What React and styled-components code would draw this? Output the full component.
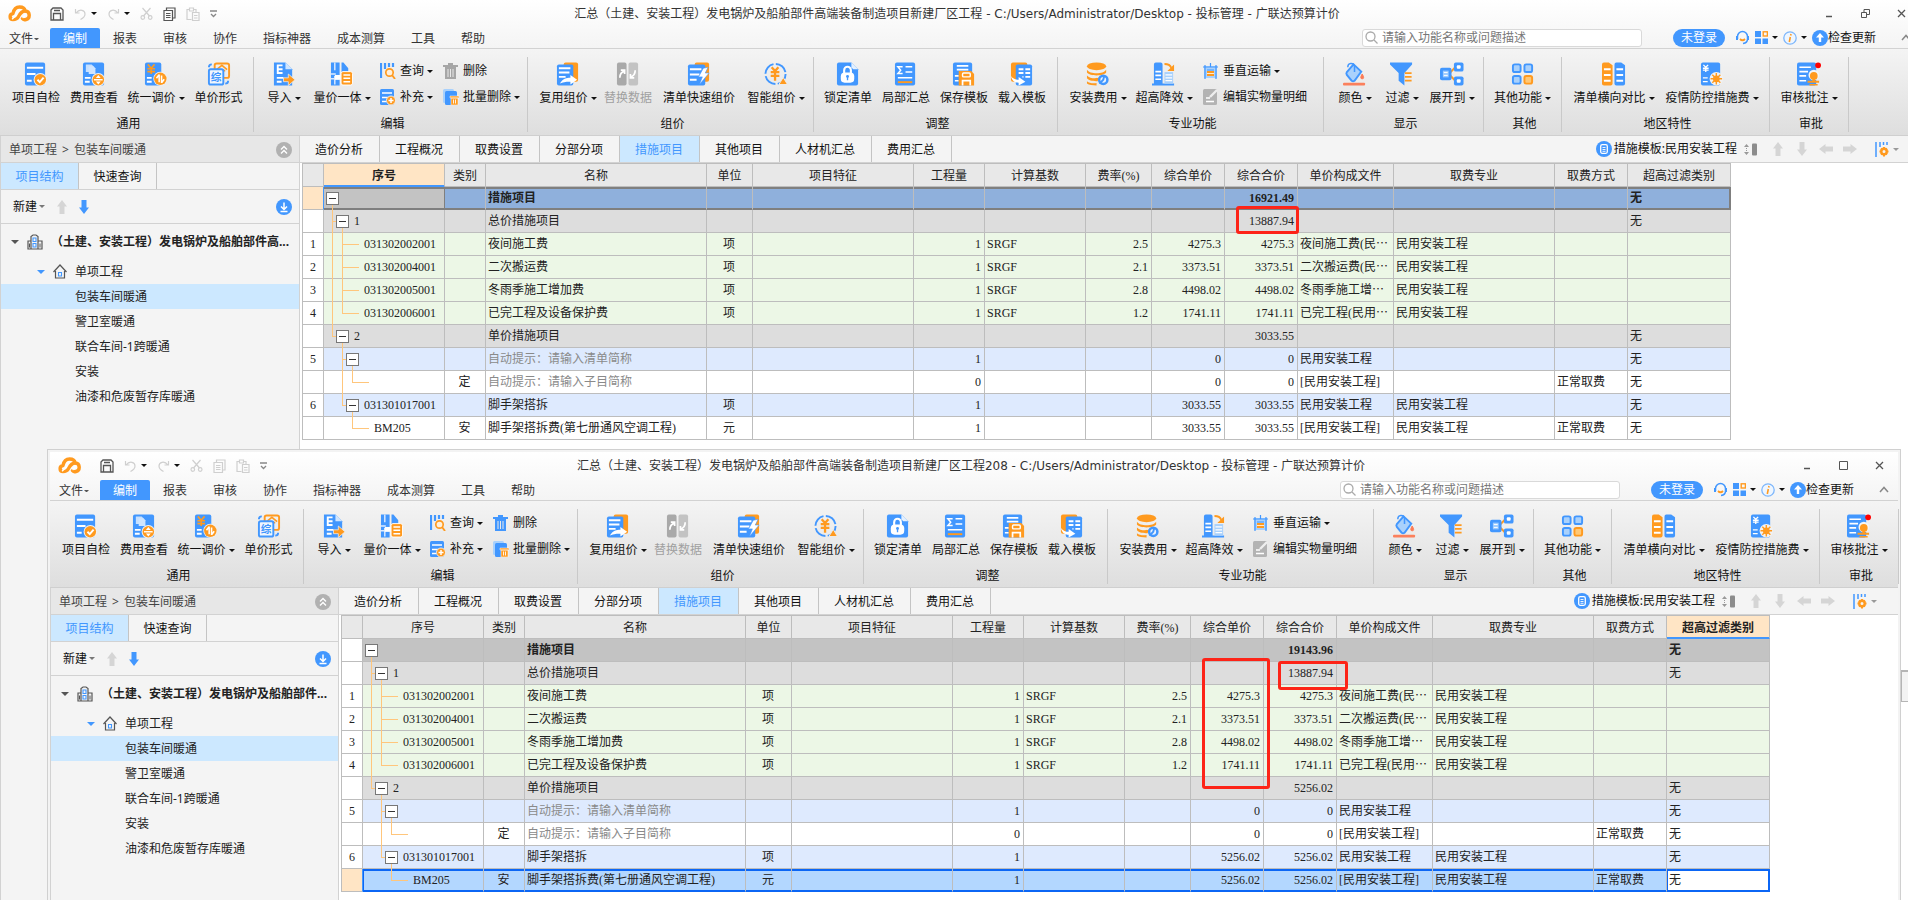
import { useId, useState } from "react";
import styled, { createGlobalStyle, css } from "styled-components";

const BLUE = "#4297fe";
const ORANGE = "#ff9a1f";
const PALE = "#a9d1fc";

const UI_FONT = `"Noto Sans", "Noto Sans CJK SC", sans-serif`;
const TITLE_FONT = `"DejaVu Sans", "Noto Sans CJK SC", sans-serif`;
const GRID_FONT = `"Liberation Serif", "Noto Sans CJK SC", serif`;

const GlobalStyle = createGlobalStyle`
  *, *::before, *::after { box-sizing: border-box; }
  html, body, #root { height: 100%; }
  body {
    margin: 0;
    overflow: hidden;
    background: #fff;
    color: #111;
    font: 12px/16px ${UI_FONT};
  }
  button, input { font: inherit; color: inherit; }
  button { padding: 0; border: 0; background: none; white-space: nowrap; }
  svg { display: block; flex: none; }
`;

/* ---------- icons ---------- */

const Svg = ({ w = 24, h = w, box = `0 0 ${w} ${h}`, children }) => (
  <svg width={w} height={h} viewBox={box} fill="none" aria-hidden="true">{children}</svg>
);

const Lines = ({ d, c = "#fff", w = 2 }) => <path d={d} stroke={c} strokeWidth={w} />;

const IconText = ({ x, y, size, fill, children }) => (
  <text x={x} y={y} fontSize={size} fill={fill} fontWeight="700" textAnchor="middle" fontFamily={UI_FONT}>{children}</text>
);

const ribbonIcons = {
  check: <>
    <rect x="1" width="21" height="24" rx="2" fill={BLUE} />
    <Lines d="M3 5.500h17M3 12h9M3 19h5" />
    <circle cx="17" cy="18" r="7" fill="#f2f2f2" /><circle cx="17" cy="18" r="6" fill={ORANGE} />
    <Lines d="M14 18l2.400 2.500 4-4.800" />
  </>,
  cost: <>
    <rect x="1" width="22" height="24" rx="2" fill={BLUE} />
    <path d="M4 2h6l2 2v6H4z" fill="#fff" opacity=".7" /><path d="M7 4h5l2 2v6H7z" fill="#cfe5ff" />
    <Lines d="M3 16h6M3 20h5" />
    <circle cx="17" cy="18" r="7" fill="#f2f2f2" /><circle cx="17" cy="18" r="6" fill={ORANGE} />
    <Lines d="M12.500 18h9" w={1.500} /><path d="M17 13l2.500 3.200h-5zM17 23l2.500-3.200h-5z" fill="#fff" />
  </>,
  adjust: <>
    <rect x="1" width="17" height="24" rx="2" fill={BLUE} />
    <path d="M4 2l3.500 4L11 2M3.500 6.500h8M3.500 9.500h8M7.500 6v6" stroke={ORANGE} strokeWidth="1.700" />
    <Lines d="M3 16h5M3 20h5" />
    <circle cx="17" cy="17" r="7.300" fill="#f2f2f2" /><circle cx="17" cy="17" r="6.500" fill={ORANGE} />
    <path d="M15.800 12.500v8M13 16.500l2.500-3.500M18.300 13.500v8M21 17.500l-2.500 3.500" stroke="#fff" strokeWidth="1.600" />
  </>,
  form: <>
    <rect x="8" y="1" width="15" height="15" rx="2" stroke={ORANGE} strokeWidth="2" />
    <path d="M10 7.500l5.500-4.500 5.500 4.500M12 8.500h7M15.500 8v6" stroke={ORANGE} strokeWidth="1.600" />
    <rect x="2" y="7" width="15" height="16" rx="2" fill="#f0f6fd" stroke={BLUE} strokeWidth="2" />
    <IconText x="9.500" y="19.500" size="11" fill={BLUE}>综</IconText>
    <path d="M2 5c0-2 1-3 3-3M19 22c2 0 3-1 3-3" stroke={BLUE} strokeWidth="2" />
  </>,
  import: <>
    <path d="M2 0h12l7 7v17H2z" fill={BLUE} /><path d="M14 0v7h7z" fill="#cfe5ff" />
    <path d="M11 3H6v8h5M6 7h5M5 16h7M5 20h5" stroke="#fff" strokeWidth="2" />
    <path d="M12 16h5v-4l7 6-7 6v-4h-5z" fill={ORANGE} stroke="#eee" strokeWidth=".8" />
  </>,
  merge: <>
    <path d="M1 0h9v24H1zM12 0h2l5 6v5h-7z" fill={BLUE} />
    <path d="M0 12h6M5 14v9M0 17h10M5 0v8" stroke="#dcebff" strokeWidth="1.500" />
    <rect x="5" y="13" width="6" height="5" fill="#fff" />
    <rect x="11.500" y="9.500" width="12" height="14" rx="2" fill={ORANGE} stroke="#fff" />
    <Lines d="M14 13h7M14 16.500h7M14 20h7" w={1.500} />
  </>,
  reuse: <>
    <rect x="8" width="15" height="20" rx="2" fill={ORANGE} />
    <rect x="1" y="2" width="17" height="22" rx="2" fill={BLUE} />
    <Lines d="M3 6h12M3 10.500h11M3 15h7" />
    <path d="M4 22c3-5 7-6 11-6v-3l7 5-7 5v-3c-4 0-6 0-11 2z" fill="#fff" />
  </>,
  replace: <>
    <rect x="1" width="10" height="24" rx="2" fill="#a9a9a9" /><rect x="13" width="10" height="24" rx="2" fill="#c3c3c3" />
    <path d="M4 16c0-4 1-6 5-7M5 8h4v4M20 8c0 4-1 6-5 7M19 16h-4v-4" stroke="#fff" strokeWidth="1.800" />
  </>,
  quick: <>
    <rect x="8" width="15" height="20" rx="2" fill={ORANGE} />
    <rect x="1" y="2" width="18" height="22" rx="2" fill={BLUE} />
    <Lines d="M3 7h12M3 12.500h10M3 18h7" />
    <path d="M17 6l5-1-3 6h4l-10 12 3-8h-4z" fill="#fff" stroke={BLUE} strokeWidth=".6" />
  </>,
  smart: <>
    <circle cx="12" cy="12" r="10.500" stroke={BLUE} strokeWidth="2" strokeDasharray="14 2.500" />
    <path d="M8 5l3.500 4L15 5M7 10h9M7 14h9M11.500 9v10" stroke={ORANGE} strokeWidth="2.400" />
    <path d="M20 15.500l4.500 7.500h-9z" fill={ORANGE} stroke="#eee" />
  </>,
  lock: <>
    <path d="M3 0h13l7 7v15a2 2 0 0 1-2 2H3a2 2 0 0 1-2-2V2a2 2 0 0 1 2-2z" fill={BLUE} /><path d="M16 0v5l2 2h5z" fill="#e3f0ff" />
    <rect x="5" y="10.500" width="14" height="10.500" rx="4" fill="#fff" />
    <path d="M8.500 12V8a3.500 3.500 0 0 1 7 0v4" stroke="#fff" strokeWidth="2.200" />
    <circle cx="12" cy="14.500" r="1.500" fill={BLUE} /><Lines d="M12 15v3.500" c={BLUE} w={1.400} />
  </>,
  sum: <>
    <rect x="1" width="21" height="24" rx="2" fill={BLUE} />
    <path d="M9 4.500H4l3 3.500-3 3.500h5" stroke="#fff" strokeWidth="1.500" />
    <Lines d="M12 4.500h7M12 10h7M4 16h15" w={1.500} /><Lines d="M4 20.500h15" c={ORANGE} />
  </>,
  save: <>
    <rect x="1" width="20" height="24" rx="2" fill={BLUE} />
    <Lines d="M5 3.500h12M5 7.500h12M3 14h4M3 19h4" w={1.700} />
    <path d="M7 9h13l3 3v12H7z" fill={ORANGE} /><rect x="11" y="11" width="8" height="4" rx="1" stroke="#fff" strokeWidth="1.500" />
    <path d="M11 24v-5h8v5" stroke="#fff" strokeWidth="1.800" />
  </>,
  load: <>
    <rect x="1" width="17" height="20" rx="2" fill={ORANGE} />
    <rect x="6" y="2" width="17" height="22" rx="2" fill={BLUE} />
    <Lines d="M9 7h5M16 7h5M9 11h5M16 11h5M13 15h1M16 15h5" />
    <path d="M1 14c2 3 5 4 8 4v-3l7 5-7 4v-3c-4 0-7-2-8-7z" fill="#fff" />
  </>,
  install: <>
    <ellipse cx="11" cy="4" rx="10" ry="4" fill={ORANGE} />
    <path d="M1 7.500c3 5 17 5 20 0v3c-3 4-17 4-20 0zM1 13.500c3 3.500 10 3.500 13 2l-2 4c-4 0-8 0-11-3zM1 19.500c2 2 6 2.500 10 2v2.500c-4 0-8-.5-10-2z" fill={ORANGE} />
    <circle cx="18" cy="18" r="4.300" fill="#e8f2fe" stroke={BLUE} strokeWidth="2.600" />
    <path d="M14 22l4-4 1-4" stroke={BLUE} strokeWidth="2" />
  </>,
  height: <>
    <path d="M2 22V2q0-2 2-2h5q2 0 2 2v20h12v2H0v-2z" fill={BLUE} />
    <Lines d="M3.500 9.500h6M3.500 13.500h6M3.500 17.500h6" w={1.700} />
    <rect x="13" y="10" width="9" height="12" fill={PALE} /><Lines d="M14 13h7M14 16h7M14 19h7" w={1.300} />
    <path d="M13 1.500c3.500 0 6 1 7 4" stroke={ORANGE} strokeWidth="2" /><path d="M23 2v7h-7z" fill={ORANGE} />
  </>,
  color: <>
    <path d="M11 2l8 7.500-7 9.500q-1.500 1-3 0L4 13q-1-1.500 0-3z" fill={PALE} stroke={BLUE} strokeWidth="2" />
    <path d="M5 5c0-5 6-5 7-1v6" stroke={BLUE} strokeWidth="1.600" />
    <path d="M20 12q3 5 0 5t0-5z" fill="#fb7a55" stroke="#fb7a55" /><rect y="21" width="23" height="3" rx="1" fill="#fb805c" />
  </>,
  filter: <>
    <path d="M0 0h23v2l-8 9v13l-6-5v-8L0 2z" fill={BLUE} />
    <Lines d="M15.500 11h7M15.500 15h7M15.500 19h7" c={ORANGE} w={1.800} />
  </>,
  expand: <>
    <path d="M9 12l7-7M9 12l7 7" stroke={ORANGE} strokeWidth="2" />
    <rect y="5.500" width="12" height="13" rx="2" fill={BLUE} /><rect x="3" y="8.500" width="6" height="7" fill="#9dcbff" />
    <Lines d="M4 10.500h4M4 13.500h4" w={1} />
    <rect x="14.500" width="10" height="9.500" rx="2" fill={BLUE} /><rect x="14.500" y="14.500" width="10" height="9.500" rx="2" fill={BLUE} />
    <rect x="17.500" y="3" width="4" height="3.500" rx="1" fill="#fff" /><rect x="17.500" y="17.500" width="4" height="3.500" rx="1" fill="#fff" />
  </>,
  other: <>
    {[[2, 2], [14, 2], [2, 14]].map(([x, y]) => <rect key={x + "-" + y} x={x} y={y} width="8" height="8" rx="2" fill={PALE} stroke={BLUE} strokeWidth="2" />)}
    <rect x="14" y="14" width="8" height="8" rx="2" fill="#ffc877" stroke={ORANGE} strokeWidth="2" />
  </>,
  compare: <>
    <path d="M0 2q0-2 2-2h5l4 3v19q0 2-2 2H2q-2 0-2-2z" fill={ORANGE} /><path d="M13 2q0-2 2-2h5l4 3v19q0 2-2 2h-7q-2 0-2-2z" fill={BLUE} />
    <Lines d="M2 7h7M2 13h7M2 19h7M15 7h7M15 13h7M15 19h7" />
  </>,
  epidemic: <>
    <rect x="1" width="20" height="24" rx="2" fill={BLUE} />
    <path d="M3.500 2.500L6 5l2.500-2.500M3 6h6M3 8h6M6 5v5M3 16h5M3 20h5" stroke="#fff" strokeWidth="1.400" />
    <circle cx="17" cy="17" r="7" fill="#f2f2f2" /><circle cx="17" cy="17" r="3.500" fill={ORANGE} />
    <path d="M17 11v12M11 17h12M12.800 12.800l8.400 8.400M21.200 12.800l-8.400 8.400" stroke={ORANGE} strokeWidth="1.500" />
  </>,
  review: <>
    <rect width="20" height="24" rx="2" fill={BLUE} />
    <Lines d="M2.500 5h12M2.500 9.500h9M2.500 14h7M2.500 19h7" w={1.700} />
    <circle cx="17.500" cy="13" r="5.500" fill="#f5f5f5" /><circle cx="17.500" cy="14" r="4" fill={ORANGE} />
    <path d="M16 15h3v4h4v2H11v-2h5zM13 22.500h8.500V24H13z" fill={ORANGE} /><circle cx="22" cy="3" r="3" fill="#f00" />
  </>,
};

const smallIcons = {
  query: <>
    <path d="M1 0v15M5 0v6M9 0v4M13 0v4" stroke={BLUE} strokeWidth="2.200" />
    <circle cx="9.500" cy="9.500" r="3.700" fill="#fff0db" stroke={ORANGE} strokeWidth="1.700" /><path d="M12 12l3 4" stroke={ORANGE} strokeWidth="1.800" />
  </>,
  supplement: <>
    <rect width="14" height="16" rx="1.500" fill={BLUE} /><Lines d="M2 4h10M2 8.500h6M2 12.500h4" w={1.500} />
    <circle cx="11" cy="11.500" r="4.500" fill={ORANGE} stroke="#eee" /><Lines d="M11 9v5M8.500 11.500h5" w={1.500} />
  </>,
  remove: <>
    <path d="M0 2h15v2H0zM5 0h5v2H5zM2 4h11v12H2z" fill="currentColor" /><Lines d="M5 6v8M7.500 6v8M10 6v8" c="#e9e9e9" w={1} />
  </>,
  removeMany: <>
    <rect width="11" height="14" rx="1.500" fill={PALE} /><rect x="2" y="2" width="12" height="14" rx="1.500" fill={BLUE} />
    <path d="M7 7h9v2H7zM8 9h7v7H8z" fill={ORANGE} stroke="#fff" strokeWidth=".5" /><Lines d="M10.500 10.500v4M12.500 10.500v4" w={0.900} />
  </>,
  lift: <>
    <rect x="1" y="3" width="13" height="12" fill={PALE} /><path d="M2 2v14M13 2v14M0 4h15M7.500 0v4M4 7h7" stroke={BLUE} strokeWidth="1.200" />
    <rect x="4" y="8" width="7" height="5" fill={ORANGE} /><Lines d="M4 10.500h7" w={0.800} />
  </>,
  edit: <>
    <rect width="14" height="16" rx="1.500" fill="#b3b3b3" /><Lines d="M3 9h4M3 12.500h8" w={1.300} /><path d="M14 1L7 8" stroke="#eee" strokeWidth="2.400" />
  </>,
};

const Logo = () => (
  <Svg w={23} h={17}>
    <g stroke={ORANGE} strokeWidth="3.400" strokeLinecap="round" strokeLinejoin="round">
      <path d="M5 14.500C1.500 14.500.8 9.300 5 8.500 6 3.500 9 2 11.500 2c3.500 0 5.300 2 5.500 4-3 0-4.500 1.800-6.500 5.500-1 1.800-1.600 3-5.500 3" />
      <path d="M17.200 6c5.200.2 5.200 7.500.8 8.500-1.500.4-3 0-3.500-.8" />
    </g>
    <path d="M4.500 13.800l4-4M15 12.500l3-3.500" stroke="#fff" strokeWidth="1.500" strokeLinecap="round" />
  </Svg>
);

const SaveFile = () => <Svg w={14}><path d="M1 3l2-2h8l2 2v10H1zM4 3.500h6M3.500 13V6.500h7V13" stroke="#555" strokeWidth="1.300" /></Svg>;
const Undo = ({ flip }) => (
  <Svg w={13}><g transform={flip ? "matrix(-1 0 0 1 13 0)" : undefined} stroke="#cfcfcf" strokeWidth="1.200"><path d="M1.500 2v4h4M2 6c4-5 9-2.500 9 1 0 2-1.500 4-4.500 5.500" /></g></Svg>
);
const Cut = () => <Svg w={13}><g stroke="#cfcfcf" strokeWidth="1.200"><path d="M2.500 1l7 8M10.500 1l-7 8" /><circle cx="2.800" cy="10.500" r="1.800" /><circle cx="10.200" cy="10.500" r="1.800" /></g></Svg>;
const Copy = ({ c }) => <Svg w={13} h={14}><path d="M1 3.500h8.500v10H1zM3.500 3V1h8.500v10H9.500M3 6.500h4.500M3 8.500h4.500M3 10.500h4.500" stroke={c} strokeWidth="1.200" /></Svg>;
const Paste = () => <Svg w={14}><path d="M5.500 12.500H1V2.500h3M7 2.500h3V5M3.500 1h4v3h-4zM6.500 5.500h6.500v8H6.500zM8 8.500h3.500M8 11h3.500" stroke="#cfcfcf" strokeWidth="1.200" /></Svg>;
const More = () => <Svg w={7} h={8}><path d="M0 1h7M1 4l2.500 2.500L6 4" stroke="#888" strokeWidth="1.300" /></Svg>;

const Caret = ({ c = "#111", w = 6 }) => <Svg w={w} h={w / 2} box="0 0 6 3"><path d="M0 0h6L3 3z" fill={c} /></Svg>;

const Arrow = ({ c = "#d5d5d5", turn = 0 }) => (
  <Svg w={14}><path transform={`rotate(${turn} 7 7)`} d="M7 0l5 6.500H9.500V14h-5V6.500H2z" fill={c} /></Svg>
);

const Headset = () => (
  <Svg w={15}><path d="M2.500 9V6.500a5 5 0 0 1 10 0V9q0 4-4.500 4.500" stroke={BLUE} strokeWidth="1.500" /><path d="M1 6h2v4H1zM12 6h2v4h-2z" fill={BLUE} /><path d="M5 9q2.500 2.500 5 0" stroke={ORANGE} strokeWidth="1.800" /></Svg>
);
const Apps = () => (
  <Svg w={13}><path d="M0 0h6v6H0zM0 7.500h6V13H0zM7.500 7.500H13V13H7.500z" fill={BLUE} /><rect x="8.200" y=".8" width="4.200" height="4.200" stroke={ORANGE} strokeWidth="1.400" /></Svg>
);
const Info = () => (
  <Svg w={14}><circle cx="7" cy="7" r="6.200" fill="#eef6ff" stroke="#7db6fb" strokeWidth="1.300" /><path d="M8 3l-.3 1.500M7.300 6l-1 5" stroke={ORANGE} strokeWidth="1.600" /></Svg>
);
const UpBadge = () => <Svg w={16}><circle cx="8" cy="8" r="8" fill={BLUE} /><path d="M8 3l4 4.500H9.200V12H6.800V7.500H4z" fill="#fff" /></Svg>;
const DownBadge = () => <Svg w={16}><circle cx="8" cy="8" r="8" fill={BLUE} /><path d="M8 3.500v6M5 7.500l3 3 3-3M4.500 12.500h7" stroke="#fff" strokeWidth="1.500" /></Svg>;
const FoldBadge = () => <Svg w={16}><circle cx="8" cy="8" r="8" fill="#b1b1b1" /><path d="M5 7.500l3-3 3 3M5 11.500l3-3 3 3" stroke="#fff" strokeWidth="1.400" /></Svg>;
const TemplateBadge = () => <Svg w={16}><circle cx="8" cy="8" r="8" fill={BLUE} /><rect x="4.700" y="3.700" width="6.600" height="8.600" rx="1.500" stroke="#fff" strokeWidth="1.300" /><Lines d="M6.500 6.500h3M6.500 8.500h3M6.500 10.300h3" w={0.900} /></Svg>;
const SortMark = () => <Svg w={13}><path d="M0 4l2.500-3L5 4M0 9l2.500 3L5 9" fill="#999" /><path d="M2.500 3v7" stroke="#999" strokeDasharray="1 1" /><rect x="8" y=".5" width="5" height="12" rx="1" fill="#8c8c8c" /></Svg>;
const ColumnSet = () => (
  <Svg w={14} h={15}><path d="M1 0v15M5 0v5M8.500 0v3M12 0v3" stroke={BLUE} strokeWidth="1.500" /><circle cx="9" cy="9.500" r="2.700" stroke={ORANGE} strokeWidth="2.400" /><path d="M9 5v2M9 12v2.500M4.500 9.500h2M11.500 9.500h2M6 6.500l1 1M11 11.500l1 1M12 6.500l-1 1M7 11.500l-1 1" stroke={ORANGE} strokeWidth="2" /></Svg>
);
const Building = () => (
  <Svg w={16}><path d="M4 15V2.500L6 1h3l2 1.500V15M4 7H1v8h14V7h-4" stroke="#555" strokeWidth="1.200" /><path d="M2.500 9.500v4M13 9.500v4" stroke="#555" /><path d="M6 4h3v3.500H6zM6 9.500h3v3.500H6z" stroke={BLUE} strokeWidth="1.100" /></Svg>
);
const House = () => <Svg w={14} h={15}><path d="M.5 8L7 1l6.500 7M2.500 7v7h9V7" stroke="#555" strokeWidth="1.200" /><path d="M5.500 8.500h3V12h-3z" stroke={BLUE} strokeWidth="1.100" /></Svg>;
const Magnifier = () => <Svg w={13}><circle cx="5.500" cy="5.500" r="4.500" stroke="#aaa" strokeWidth="1.300" /><path d="M9 9l3.500 3.500" stroke="#aaa" strokeWidth="1.300" /></Svg>;

/* ---------- window frame ---------- */

const Desktop = styled.main`
  position: relative;
  height: 100%;
  min-height: 100vh;
  overflow: hidden;
`;

const AppWindow = styled.section`
  position: absolute;
  display: flex;
  flex-direction: column;
  background: #fff;
  overflow: hidden;
  ${({ $back }) => $back
    ? css`inset: 0 -12px 0 0;`
    : css`
      inset: 449px 7px 0 47px;
      border: solid #d0d0d0;
      border-width: 1px 1px 0;
      padding: 2px 2px 0;
      background: #f3f3f3;
    `}
`;

const Chrome = styled.header`
  background: linear-gradient(#fff, #f4f4f4);
  border-bottom: 1px solid #d2d2d2;
`;

const TitleBar = styled.div`
  display: grid;
  grid-template-columns: 1fr auto 1fr;
  align-items: center;
  height: 27px;
  padding: 0 14px 0 8px;
`;

const QuickBar = styled.div`
  display: flex;
  align-items: center;
  gap: 10px;
  height: 24px;
`;

const IconButton = styled.button`
  display: inline-flex;
  align-items: center;
  gap: ${({ $gap = 4 }) => $gap}px;
`;

const LogoMark = styled.span`
  margin-right: 9px;
`;

const Title = styled.h1`
  margin: 0;
  font: 400 12px/16px ${TITLE_FONT};
  color: #333;
`;

const WindowButtons = styled.div`
  display: flex;
  justify-content: flex-end;
  gap: 27px;
  height: 24px;
  align-items: center;
`;

const MenuBar = styled.div`
  display: flex;
  align-items: flex-end;
  height: 21px;
`;

const MenuTab = styled.button`
  display: flex;
  align-items: center;
  gap: 1px;
  height: 20px;
  padding: 2px 13px 0;
  border-radius: 2px 2px 0 0;
  color: ${({ $active }) => ($active ? "#fff" : "#333")};
  background: ${({ $active }) => ($active ? BLUE : "none")};
  ${({ $tight }) => $tight && css`width: 50px; padding: 2px 0 0 9px;`}
`;

const Tools = styled.div`
  display: flex;
  align-items: center;
  align-self: center;
  height: 18px;
  margin-left: auto;
  margin-right: 9px;
  gap: 5px;
`;

const Search = styled.label`
  display: flex;
  align-items: center;
  gap: 4px;
  width: 280px;
  height: 18px;
  margin-right: 26px;
  padding: 0 3px 0 2px;
  border: 1px solid #d9d9d9;
  border-radius: 3px;
  background: #fff;

  input {
    flex: 1;
    min-width: 0;
    height: 16px;
    padding: 0;
    border: 0;
    outline: 0;
    background: none;
  }
  input::placeholder { color: #777; opacity: 1; }
`;

const Login = styled.button`
  width: 52px;
  height: 18px;
  margin-right: 5px;
  border-radius: 9px;
  background: ${BLUE};
  color: #fff;
`;

const Fold = styled.button`
  margin-left: 20px;
`;

/* ---------- ribbon ---------- */

const RibbonBar = styled.div`
  display: flex;
  height: 87px;
  padding: 8px 0 3px;
  background: linear-gradient(#f4f4f4, #dedede);
  border-bottom: 1px solid #cfcfcf;
`;

const Group = styled.section`
  display: flex;
  flex-direction: column;
  flex: none;
  border-right: 1px solid #c9c9c9;
  padding-top: 5px;
`;

const GroupRow = styled.div`
  display: flex;
  padding: 0 ${({ $right }) => $right}px 0 ${({ $left }) => $left}px;
`;

const GroupName = styled.h2`
  margin: 10px 0 0 4px;
  font-size: 12px;
  line-height: 16px;
  font-weight: 400;
  text-align: center;
`;

const BigButton = styled.button`
  display: flex;
  flex-direction: column;
  align-items: center;
  gap: 4px;
  width: ${({ $w }) => $w}px;
  color: ${({ disabled }) => (disabled ? "#a0a0a0" : "#111")};
`;

const Caption = styled.span`
  display: inline-flex;
  align-items: center;
  gap: 3px;
  line-height: 16px;
`;

const SmallColumn = styled.div`
  display: flex;
  flex-direction: column;
  gap: 10px;
  width: ${({ $w }) => $w}px;
  padding-top: 1px;
  margin-left: ${({ $gap = 0 }) => $gap}px;
`;

const SmallButton = styled.button`
  display: flex;
  align-items: center;
  gap: 4px;
  height: 16px;

  svg { color: ${({ $muted }) => ($muted ? "#a6a6a6" : BLUE)}; }
`;

const groups = [
  { name: "通用", left: 7, right: 5, items: [["check", "项目自检", 58], ["cost", "费用查看", 58], ["adjust", "统一调价", 66, 1], ["form", "单价形式", 59]] },
  {
    name: "编辑", left: 10, right: 8, items: [["import", "导入", 40, 1], ["merge", "量价一体", 76, 1]],
    columns: [
      { w: 63, items: [["query", "查询", 1], ["supplement", "补充", 1]] },
      { w: 76, items: [["remove", "删除"], ["removeMany", "批量删除", 1]] },
    ],
  },
  { name: "组价", left: 10, right: 1, items: [["reuse", "复用组价", 60, 1], ["replace", "替换数据", 60], ["quick", "清单快速组价", 82], ["smart", "智能组价", 72, 1]] },
  { name: "调整", left: 5, right: 6, items: [["lock", "锁定清单", 58], ["sum", "局部汇总", 58], ["save", "保存模板", 58], ["load", "载入模板", 58]] },
  {
    name: "专业功能", left: 7, right: 17, items: [["install", "安装费用", 66, 1], ["height", "超高降效", 66, 1]],
    columns: [{ w: 103, gap: 6, items: [["lift", "垂直运输", 1], ["edit", "编辑实物量明细"]] }],
  },
  { name: "显示", left: 8, right: 5, items: [["color", "颜色", 46, 1], ["filter", "过滤", 48, 1], ["expand", "展开到", 52, 1]] },
  { name: "其他", left: 0, right: 0, items: [["other", "其他功能", 77, 1]] },
  { name: "地区特性", left: 6, right: 5, items: [["compare", "清单横向对比", 92, 1], ["epidemic", "疫情防控措施费", 104, 1]] },
  { name: "审批", left: 0, right: 0, items: [["review", "审核批注", 78, 1]] },
];

function Ribbon({ canDelete }) {
  return (
    <RibbonBar>
      {groups.map((g) => (
        <Group key={g.name}>
          <GroupRow $left={g.left} $right={g.right}>
            {g.items.map(([icon, label, w, more]) => (
              <BigButton key={icon} type="button" $w={w} disabled={icon === "replace"}>
                <Svg box="0 0 25 24">{ribbonIcons[icon]}</Svg>
                <Caption>{label}{more && <Caret />}</Caption>
              </BigButton>
            ))}
            {g.columns?.map((col) => (
              <SmallColumn key={col.w} $w={col.w} $gap={col.gap}>
                {col.items.map(([icon, label, more]) => (
                  <SmallButton key={icon} type="button" $muted={!canDelete}>
                    <Svg w={16}>{smallIcons[icon]}</Svg>
                    <Caption>{label}{more && <Caret />}</Caption>
                  </SmallButton>
                ))}
              </SmallColumn>
            ))}
          </GroupRow>
          <GroupName>{g.name}</GroupName>
        </Group>
      ))}
    </RibbonBar>
  );
}

/* ---------- project panel ---------- */

const Body = styled.div`
  display: flex;
  flex: 1;
  min-height: 0;
`;

const Sidebar = styled.aside`
  display: flex;
  flex-direction: column;
  flex: none;
  width: ${({ $w }) => $w}px;
  background: #f4f4f4;
  border: solid #d2d2d2;
  border-width: 0 1px;
`;

const PathBar = styled.div`
  display: flex;
  align-items: center;
  justify-content: space-between;
  height: 27px;
  padding: 1px 7px 0 8px;
  background: #e7e7e7;
  border-bottom: 1px solid #d2d2d2;
  color: #444;
`;

const PathMark = styled.span`
  margin: 0 5px;
`;

const SideTabs = styled.div`
  display: flex;
  height: 27px;
  border-bottom: 1px solid #d2d2d2;
`;

const SideTab = styled.button`
  width: 78px;
  padding-top: 1px;
  border-right: 1px solid #c4c4c4;
  color: ${({ $active }) => ($active ? BLUE : "#111")};
  background: ${({ $active }) => ($active ? "#cce8ff" : "#f4f4f4")};
`;

const SideTools = styled.div`
  display: flex;
  align-items: center;
  gap: 8px;
  height: 34px;
  padding: 0 7px 0 12px;
  border-bottom: 1px solid #d2d2d2;

  > :first-child { margin-right: 2px; }
  > :last-child { margin-left: auto; }
`;

const TreeRow = styled.div`
  display: flex;
  align-items: center;
  gap: 8px;
  height: ${({ $root }) => ($root ? 35 : 25)}px;
  padding-left: ${({ $indent }) => $indent}px;
  font-weight: ${({ $root }) => ($root ? 700 : 400)};
  color: #222;
  background: ${({ $selected }) => ($selected ? "#cce8ff" : "none")};
  white-space: nowrap;
`;

const places = ["包装车间暖通", "警卫室暖通", "联合车间-1跨暖通", "安装", "油漆和危废暂存库暖通"];

function ProjectPanel({ width, root }) {
  const [place, setPlace] = useState(places[0]);
  return (
    <Sidebar $w={width}>
      <PathBar>
        <span>单项工程<PathMark>&gt;</PathMark>{place}</span>
        <button type="button" aria-label="收起"><FoldBadge /></button>
      </PathBar>
      <SideTabs>
        <SideTab type="button" $active>项目结构</SideTab>
        <SideTab type="button">快速查询</SideTab>
      </SideTabs>
      <SideTools>
        <IconButton type="button" $gap={2}>新建<Caret c="#777" /></IconButton>
        <button type="button" aria-label="上移"><Arrow /></button>
        <button type="button" aria-label="下移"><Arrow c={BLUE} turn={180} /></button>
        <button type="button" aria-label="导入项目"><DownBadge /></button>
      </SideTools>
      <TreeRow $root $indent={10}>
        <Caret c="#555" w={8} />
        <Building />
        <span>{root}</span>
      </TreeRow>
      <TreeRow $indent={36}>
        <Caret c={BLUE} w={8} />
        <House />
        <span>单项工程</span>
      </TreeRow>
      {places.map((p) => (
        <TreeRow key={p} $indent={74} $selected={p === place} onClick={() => setPlace(p)}>
          <span>{p}</span>
        </TreeRow>
      ))}
    </Sidebar>
  );
}

/* ---------- bill grid ---------- */

const Main = styled.div`
  display: flex;
  flex-direction: column;
  flex: 1;
  min-width: 0;
  background: #fff;
`;

const TabBar = styled.div`
  display: flex;
  height: 27px;
  flex: none;
  background: #f4f4f4;
  border-bottom: 1px solid #d2d2d2;
`;

const PageTab = styled.button`
  flex: none;
  padding: 2px 16px 0 15px;
  border-right: 1px solid #c4c4c4;
  color: ${({ $active }) => ($active ? BLUE : "#111")};
  background: ${({ $active }) => ($active ? "#cce8ff" : "none")};
`;

const TabTools = styled.div`
  display: flex;
  align-items: center;
  gap: 10px;
  margin-left: auto;
  padding-right: 21px;

  > :nth-child(1) { margin-right: 4px; }
  > :last-child { margin-left: 8px; }
`;

const TemplateName = styled.span`
  margin-right: 5px;
`;

const GridArea = styled.div`
  padding-left: 2px;
`;

const Grid = styled.table`
  table-layout: fixed;
  width: 1429px;
  border-spacing: 0;
  border-top: 1px solid #bdbdbd;
  font: 12px/16px ${GRID_FONT};
  color: #222;
`;

const Th = styled.th`
  height: 23px;
  padding: 1px 0 0;
  font-weight: ${({ $active }) => ($active ? 700 : 400)};
  background: ${({ $active }) => ($active ? "#ffe5c5" : "#e8e8e8")};
  border-right: 1px solid #bdbdbd;
  border-bottom: 1px solid #bdbdbd;
  ${({ $active }) => $active && css`border-bottom-color: ${BLUE}; box-shadow: inset 0 -1px ${BLUE};`}
  &:first-child { border-left: 1px solid #bdbdbd; }
`;

const tones = {
  top: "#c3c3c3",
  group: "#dddddd",
  bill: "#ecf7e6",
  unit: "#deeafe",
  plain: "#ffffff",
};

const Td = styled.td`
  height: 23px;
  padding: 0 3px 0 2px;
  overflow: hidden;
  white-space: nowrap;
  text-align: ${({ $align = "left" }) => $align};
  color: ${({ $hint }) => ($hint ? "#8a8a8a" : "inherit")};
  border-right: 1px solid #bdbdbd;
  border-bottom: 1px solid #bdbdbd;
`;

const RowNumber = styled(Td)`
  padding: 0;
  text-align: center;
  background: #fff;
  border-left: 1px solid #bdbdbd;
`;

const Row = styled.tr`
  background: ${({ $tone }) => tones[$tone]};
  font-weight: ${({ $tone }) => ($tone === "top" ? 700 : 400)};

  ${({ $pick }) => $pick && css`
    background: ${$pick.fill};
    td:first-child { background: #ffe5c5; border-right-color: ${BLUE}; }
    td:not(:first-child) {
      box-shadow: inset 0 2px ${$pick.line}, inset 0 -1px ${$pick.line};
      border-bottom-color: ${$pick.line};
    }
    td:last-child { border-right-color: ${$pick.line}; }
  `}
  ${({ $pick }) => $pick?.cell === "first" && css`
    td:nth-child(2) {
      background: #c3c3c3;
      border-right-color: ${$pick.line};
    }
    td:last-child { box-shadow: inset 0 2px ${$pick.line}, inset -1px -1px ${$pick.line}; }
  `}
  ${({ $pick }) => $pick?.cell === "last" && css`
    td:nth-child(2) { box-shadow: inset 1px 2px ${$pick.line}, inset 0 -1px ${$pick.line}; }
    td:last-child {
      background: #fff;
      box-shadow: inset 1px 2px ${$pick.line}, inset -1px -1px ${$pick.line};
    }
  `}
`;

const CodeCell = styled(Td)`
  padding: 0;
  overflow: visible;

  > div { display: flex; align-items: center; height: 22px; }
`;

const Guides = styled.svg`
  overflow: visible;
`;

const Toggle = styled.button`
  position: relative;
  flex: none;
  width: 13px;
  height: 13px;
  margin-right: 5px;
  border: 1px solid #777;
  background: linear-gradient(#333, #333) center / 7px 1px no-repeat #fff;

  &::after {
    content: "";
    position: absolute;
    left: 5px;
    top: 12px;
    height: 5px;
    border-left: 1px solid #ffc67c;
  }
`;

// guides: [x, "full" | "half"] verticals; reach: where the branch to this row ends
function Code({ row }) {
  const { guides = [], box, reach, text, at } = row.code;
  const branch = guides.length ? guides[guides.length - 1][0] : 0;
  return (
    <CodeCell>
      <div>
        <Guides width={box ? box - 6 : at} height="22">
          <g stroke="#ffc67c">
            {guides.map(([x, kind]) => <path key={x} d={`M${x}.5 0V${kind === "half" ? 11.500 : 23}`} />)}
            {reach && <path d={`M${branch} 11.500H${reach}`} />}
          </g>
        </Guides>
        {box && <Toggle type="button" aria-label="折叠" />}
        {text}
      </div>
    </CodeCell>
  );
}

const columns = [
  ["", 22], ["序号", 121], ["类别", 41], ["名称", 221], ["单位", 46], ["项目特征", 161], ["工程量", 71],
  ["计算基数", 101], ["费率(%)", 66], ["综合单价", 73], ["综合合价", 73], ["单价构成文件", 96],
  ["取费专业", 161], ["取费方式", 73], ["超高过滤类别", 103],
];

const trade = "民用安装工程";

const bill = (no, code, name, rate, price, file, last) => ({
  no, tone: "bill", name, unit: "项", qty: "1", base: "SRGF", rate, price, total: price, file, trade,
  code: { guides: [[8, "full"], [18, last ? "half" : "full"]], reach: 35, at: 40, text: code },
});

const buildRows = (total, unitPrice) => [
  { tone: "top", name: "措施项目", total, over: "无", code: { box: 8 } },
  { tone: "group", name: "总价措施项目", total: "13887.94", over: "无", code: { guides: [[8, "full"]], box: 18, reach: 12, text: "1" } },
  bill(1, "031302002001", "夜间施工费", "2.5", "4275.3", "夜间施工费(民⋯"),
  bill(2, "031302004001", "二次搬运费", "2.1", "3373.51", "二次搬运费(民⋯"),
  bill(3, "031302005001", "冬雨季施工增加费", "2.8", "4498.02", "冬雨季施工增⋯"),
  bill(4, "031302006001", "已完工程及设备保护费", "1.2", "1741.11", "已完工程(民用⋯", true),
  { tone: "group", name: "单价措施项目", total: unitPrice, over: "无", code: { guides: [[8, "half"]], box: 18, reach: 12, text: "2" } },
  { no: 5, tone: "unit", hint: true, name: "自动提示：请输入清单简称", qty: "1", price: "0", total: "0", file: trade, over: "无", code: { guides: [[18, "full"]], box: 28, reach: 22 } },
  { tone: "plain", hint: true, kind: "定", name: "自动提示：请输入子目简称", qty: "0", price: "0", total: "0", file: `[${trade}]`, way: "正常取费", over: "无", code: { guides: [[18, "full"], [28, "half"]], reach: 45, at: 50 } },
  { no: 6, tone: "unit", name: "脚手架搭拆", unit: "项", qty: "1", price: unitPrice, total: unitPrice, file: trade, trade, over: "无", code: { guides: [[18, "half"]], box: 28, reach: 22, text: "031301017001" } },
  { tone: "plain", kind: "安", name: "脚手架搭拆费(第七册通风空调工程)", unit: "元", qty: "1", price: unitPrice, total: unitPrice, file: `[${trade}]`, trade, way: "正常取费", over: "无", code: { guides: [[28, "half"]], reach: 45, at: 50, text: "BM205" } },
];

function BillGrid({ rows, pick, activeColumn }) {
  return (
    <Grid>
      <colgroup>{columns.map(([name, w]) => <col key={name} width={w} />)}</colgroup>
      <thead>
        <tr>{columns.map(([name]) => <Th key={name} $active={name === activeColumn}>{name}</Th>)}</tr>
      </thead>
      <tbody>
        {rows.map((r, i) => (
          <Row key={i} $tone={r.tone} $pick={pick.row === i ? pick : null}>
            <RowNumber>{r.no}</RowNumber>
            <Code row={r} />
            <Td $align="center">{r.kind}</Td>
            <Td $hint={r.hint}>{r.name}</Td>
            <Td $align="center">{r.unit}</Td>
            <Td />
            <Td $align="right">{r.qty}</Td>
            <Td>{r.base}</Td>
            <Td $align="right">{r.rate}</Td>
            <Td $align="right">{r.price}</Td>
            <Td $align="right">{r.total}</Td>
            <Td>{r.file}</Td>
            <Td>{r.trade}</Td>
            <Td>{r.way}</Td>
            <Td>{r.over}</Td>
          </Row>
        ))}
      </tbody>
    </Grid>
  );
}

/* ---------- one program window ---------- */

const menus = ["编制", "报表", "审核", "协作", "指标神器", "成本测算", "工具", "帮助"];
const pages = ["造价分析", "工程概况", "取费设置", "分部分项", "措施项目", "其他项目", "人材机汇总", "费用汇总"];

function BudgetWindow({ back, project, root, sideWidth, rows, pick, activeColumn }) {
  const searchId = useId();
  return (
    <AppWindow $back={back}>
      <Chrome>
        <TitleBar>
          <QuickBar>
            <LogoMark><Logo /></LogoMark>
            <button type="button" aria-label="保存"><SaveFile /></button>
            <IconButton type="button" aria-label="撤销"><Undo /><Caret /></IconButton>
            <IconButton type="button" aria-label="恢复"><Undo flip /><Caret /></IconButton>
            <button type="button" aria-label="剪切"><Cut /></button>
            <button type="button" aria-label="复制"><Copy c={back ? "#555" : "#cfcfcf"} /></button>
            <button type="button" aria-label="粘贴"><Paste /></button>
            <button type="button" aria-label="更多"><More /></button>
          </QuickBar>
          <Title>汇总（土建、安装工程）发电锅炉及船舶部件高端装备制造项目{project} - C:/Users/Administrator/Desktop - 投标管理 - 广联达预算计价</Title>
          <WindowButtons>
            <button type="button" aria-label="最小化"><Svg w={9}><path d="M1 7.500h6" stroke="#555" strokeWidth="1.500" /></Svg></button>
            <button type="button" aria-label={back ? "还原" : "最大化"}>
              <Svg w={9}><path d={back ? "M.5 3.500h5v5h-5zM3 3V.5h5.500v5H6" : "M.5.5h8v8h-8z"} stroke="#555" /></Svg>
            </button>
            <button type="button" aria-label="关闭"><Svg w={9}><path d="M1 1l7 7M8 1L1 8" stroke="#555" strokeWidth="1.300" /></Svg></button>
          </WindowButtons>
        </TitleBar>
        <MenuBar>
          <MenuTab type="button" $tight>文件<Caret c="#555" w={5} /></MenuTab>
          {menus.map((m) => <MenuTab key={m} type="button" $active={m === "编制"}>{m}</MenuTab>)}
          <Tools>
            <Search htmlFor={searchId}>
              <Magnifier />
              <input id={searchId} type="text" aria-label="搜索" placeholder="请输入功能名称或问题描述" />
            </Search>
            <Login type="button">未登录</Login>
            <button type="button" aria-label="客服"><Headset /></button>
            <IconButton type="button" aria-label="应用"><Apps /><Caret /></IconButton>
            <IconButton type="button" aria-label="信息"><Info /><Caret /></IconButton>
            <IconButton type="button" $gap={0}><UpBadge />检查更新</IconButton>
            <Fold type="button" aria-label="折叠功能区"><Svg w={10} h={7}><path d="M1 6l4-4.500L9 6" stroke="#888" strokeWidth="1.500" /></Svg></Fold>
          </Tools>
        </MenuBar>
      </Chrome>
      <Ribbon canDelete={!back} />
      <Body>
        <ProjectPanel width={sideWidth} root={root} />
        <Main>
          <TabBar>
            {pages.map((p) => <PageTab key={p} type="button" $active={p === "措施项目"}>{p}</PageTab>)}
            <TabTools>
              <IconButton type="button" $gap={2}><TemplateBadge /><TemplateName>措施模板:民用安装工程</TemplateName><SortMark /></IconButton>
              <button type="button" aria-label="上移"><Arrow /></button>
              <button type="button" aria-label="下移"><Arrow turn={180} /></button>
              <button type="button" aria-label="升级"><Arrow turn={-90} /></button>
              <button type="button" aria-label="降级"><Arrow turn={90} /></button>
              <IconButton type="button" aria-label="列设置"><ColumnSet /><Caret c="#999" /></IconButton>
            </TabTools>
          </TabBar>
          <GridArea>
            <BillGrid rows={rows} pick={pick} activeColumn={activeColumn} />
          </GridArea>
        </Main>
      </Body>
    </AppWindow>
  );
}

/* red marks drawn over the cells being compared */
const Mark = styled.div`
  position: absolute;
  left: ${({ $x }) => $x}px;
  top: ${({ $y }) => $y}px;
  width: ${({ $w }) => $w}px;
  height: ${({ $h }) => $h}px;
  border: 3px solid #fd2418;
  border-radius: 3px;
  pointer-events: none;
`;

const EdgeHandle = styled.div`
  position: absolute;
  right: 0;
  top: 670px;
  width: 7px;
  height: 32px;
  border: solid #b5b5b5;
  border-width: 2px 0 1px 1px;
  background: #f3f3f3;
`;

export default function App() {
  return (
    <>
      <GlobalStyle />
      <Desktop>
        <BudgetWindow
          back
          project="新建厂区工程"
          root="（土建、安装工程）发电锅炉及船舶部件高..."
          sideWidth={300}
          rows={buildRows("16921.49", "3033.55")}
          pick={{ row: 0, fill: "#8fb0dc", line: "#7f7f7f", cell: "first" }}
          activeColumn="序号"
        />
        <EdgeHandle />
        <Mark $x={1236} $y={206} $w={63} $h={28} />
        <BudgetWindow
          project="新建厂区工程208"
          root="（土建、安装工程）发电锅炉及船舶部件..."
          sideWidth={289}
          rows={buildRows("19143.96", "5256.02")}
          pick={{ row: 10, fill: "#b3d7ff", line: "#0b66f5", cell: "last" }}
          activeColumn="超高过滤类别"
        />
        <Mark $x={1202} $y={658} $w={68} $h={131} />
        <Mark $x={1278} $y={661} $w={70} $h={29} />
      </Desktop>
    </>
  );
}
